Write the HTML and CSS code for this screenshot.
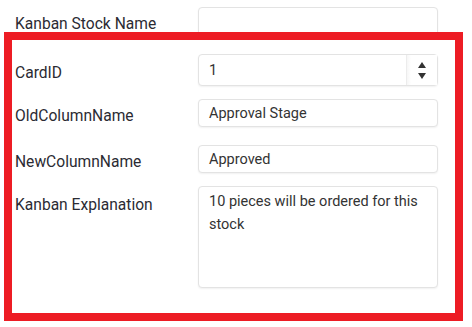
FILE: index.html
```html
<!DOCTYPE html>
<html lang="en">
<head>
    <meta charset="UTF-8">
    <meta name="viewport" content="width=device-width, initial-scale=1.0">
    <title>Kanban Card Edit</title>
    <link rel="stylesheet" href="styles.css">
</head>
<body>
    <div class="row row-top">
        <label class="label">Kanban Stock Name</label>
        <div class="field field-stock"></div>
    </div>
    <div class="highlight">
        <div class="row row-card">
            <label class="label">CardID</label>
            <div class="field field-card">
                <span class="value">1</span>
                <span class="spinner">
                    <span class="arrow up"></span>
                    <span class="arrow down"></span>
                </span>
            </div>
        </div>
        <div class="row row-old">
            <label class="label">OldColumnName</label>
            <div class="field field-short"><span class="value">Approval Stage</span></div>
        </div>
        <div class="row row-new">
            <label class="label">NewColumnName</label>
            <div class="field field-short"><span class="value">Approved</span></div>
        </div>
        <div class="row row-text">
            <label class="label">Kanban Explanation</label>
            <div class="field field-area">10 pieces will be ordered for this stock</div>
        </div>
    </div>
</body>
</html>
```

FILE: styles.css
```css
body {
    margin: 0;
    background-color: #fff;
    color: #333;
    font-family: Roboto, "Liberation Sans", sans-serif;
    font-size: 14.5px;
}
.row {
    display: flex;
    align-items: center;
}
.label {
    width: 183px;
    padding-left: 15px;
    padding-top: 5px;
    flex-shrink: 0;
    font-size: 15.6px;
    color: #2b2b33;
}
.field {
    box-sizing: border-box;
    width: 240px;
    background: #fff;
    border: 1px solid #e3e3e3;
    border-radius: 4px;
    box-shadow: 0 1px 2px rgba(0, 0, 0, 0.06);
    display: flex;
    align-items: center;
}
.value {
    padding-left: 10px;
    flex: 1;
}
/* first row is cut off by the red frame */
.row-top {
    height: 25px;
    padding-top: 7px;
    align-items: flex-start;
    overflow: hidden;
}
.row-top .label {
    padding-top: 8px;
}
.field-stock {
    height: 32px;
}
.highlight {
    width: 443px;
    height: 273px;
    margin-left: 4px;
    border: 8px solid #ed1c24;
}
.highlight .label {
    padding-left: 3px;
}
.row-card {
    margin-top: 14px;
}
.field-card {
    height: 32px;
    align-items: stretch;
}
.field-card .value {
    display: flex;
    align-items: center;
}
.spinner {
    width: 30px;
    border-left: 1px solid #ececec;
    background: linear-gradient(to right, #f6f6f6, #fff 4px);
    display: flex;
    flex-direction: column;
    align-items: center;
    justify-content: center;
    gap: 5px;
}
.arrow {
    width: 0;
    height: 0;
    border-left: 4px solid transparent;
    border-right: 4px solid transparent;
}
.up {
    border-bottom: 6px solid #333;
}
.down {
    border-top: 6px solid #333;
}
.row-old {
    margin-top: 13px;
}
.row-new {
    margin-top: 18px;
}
.field-short {
    height: 28px;
}
.row-text {
    margin-top: 13px;
    align-items: flex-start;
}
.row-text .label {
    padding-top: 10px;
}
.field-area {
    height: 102px;
    display: block;
    padding: 3px 10px;
    line-height: 23px;
}
```
